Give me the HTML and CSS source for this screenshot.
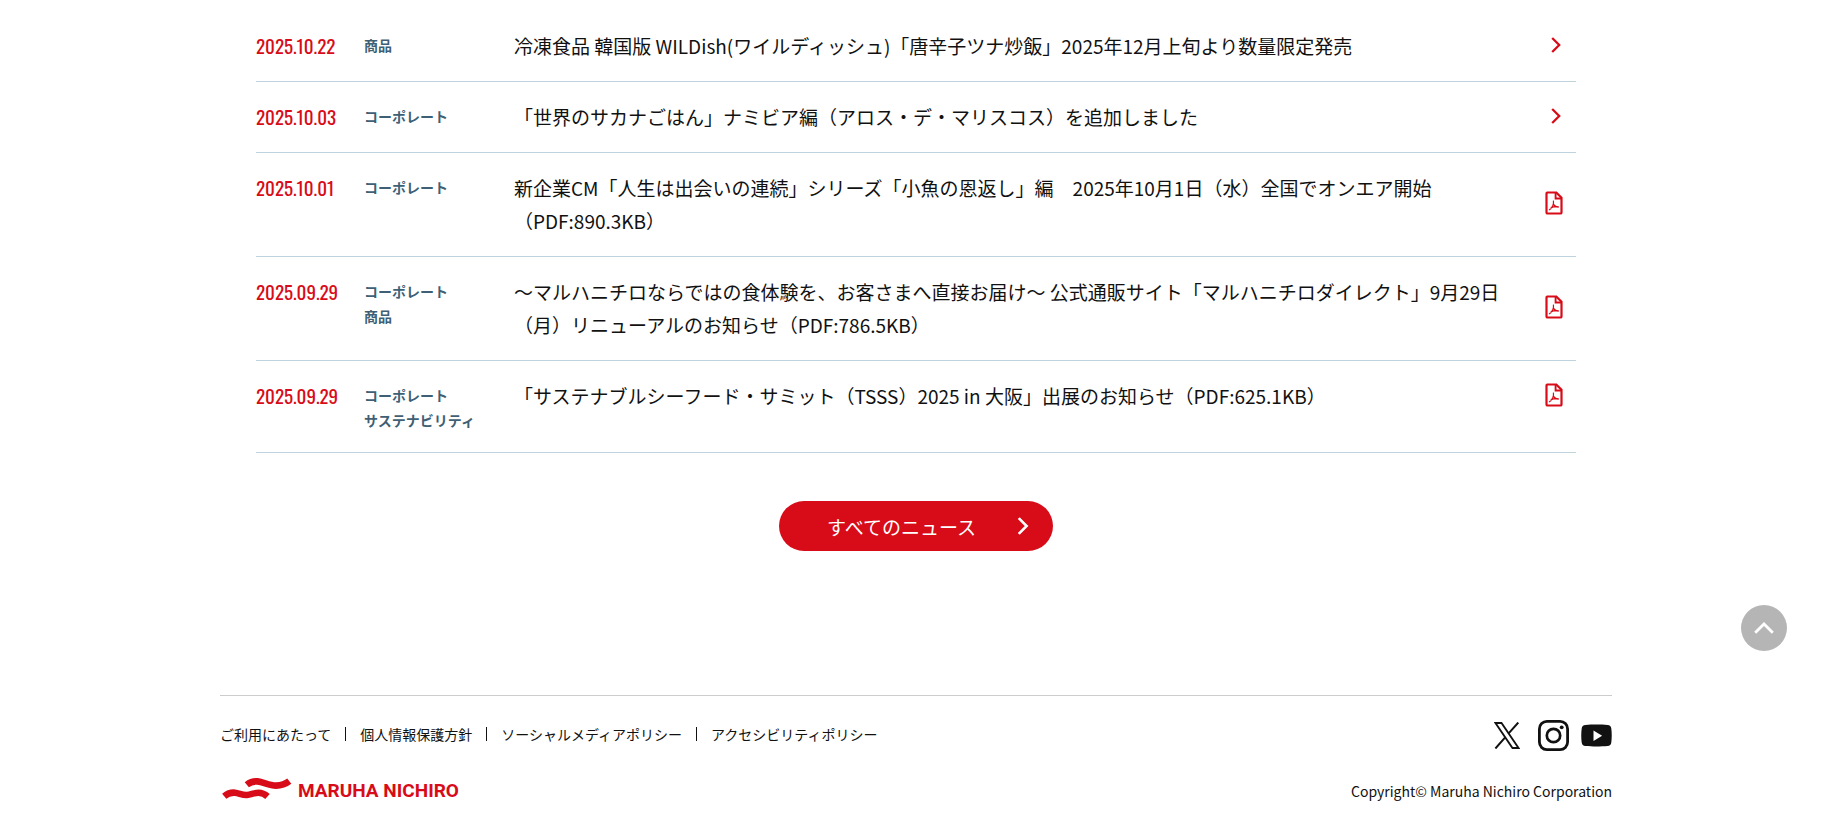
FILE: index.html
```html
<!DOCTYPE html>
<html lang="ja">
<head>
  <meta charset="UTF-8">
  <meta name="viewport" content="width=device-width, initial-scale=1.0">
  <title>マルハニチロ株式会社</title>
  <link rel="stylesheet" href="styles.css">
</head>
<body>
  <!-- Shared icons -->
  <svg class="sprite" aria-hidden="true">
    <symbol id="icon-arrow" viewBox="0 0 10 16">
      <path d="M1.200 1 8.200 8l-7 7" fill="none" stroke="currentColor" stroke-width="2.300"/>
    </symbol>
    <symbol id="icon-pdf" viewBox="0 0 18 24">
      <path d="M2.300 1.500h9l5.200 5.300v14.600a1.100 1.100 0 0 1-1.100 1.100H2.600a1.100 1.100 0 0 1-1.100-1.100V2.300z" fill="none" stroke="currentColor" stroke-width="2.200"/>
      <path d="M10.600 1.500v6h6" fill="none" stroke="currentColor" stroke-width="1.900"/>
      <path d="M8.400 9.600c.3 2 .2 3.400-.5 5C7 16.600 5.700 18.300 4 19M8.200 12.500c.8 2 2.700 3.500 5.600 3.600M5.600 17c2.400-1.100 5-1.500 8.200-1.200" fill="none" stroke="currentColor" stroke-width="1.200"/>
    </symbol>
  </svg>

  <main class="news">
    <ul class="news-list">
      <li class="news-item">
        <time class="news-date" datetime="2025-10-22">2025.10.22</time>
        <div class="news-cat"><span>商品</span></div>
        <a class="news-link" href="#">
          <span class="news-title">冷凍食品 韓国版 WILDish(ワイルディッシュ)「唐辛子ツナ炒飯」2025年12月上旬より数量限定発売</span>
          <svg class="icon-arrow"><use href="#icon-arrow"/></svg>
        </a>
      </li>
      <li class="news-item">
        <time class="news-date" datetime="2025-10-03">2025.10.03</time>
        <div class="news-cat"><span>コーポレート</span></div>
        <a class="news-link" href="#">
          <span class="news-title">「世界のサカナごはん」ナミビア編（アロス・デ・マリスコス）を追加しました</span>
          <svg class="icon-arrow"><use href="#icon-arrow"/></svg>
        </a>
      </li>
      <li class="news-item">
        <time class="news-date" datetime="2025-10-01">2025.10.01</time>
        <div class="news-cat"><span>コーポレート</span></div>
        <a class="news-link" href="#">
          <span class="news-title">新企業CM「人生は出会いの連続」シリーズ「小魚の恩返し」編　2025年10月1日（水）全国でオンエア開始<br>（PDF:890.3KB）</span>
          <svg class="icon-pdf"><use href="#icon-pdf"/></svg>
        </a>
      </li>
      <li class="news-item">
        <time class="news-date" datetime="2025-09-29">2025.09.29</time>
        <div class="news-cat"><span>コーポレート</span><span>商品</span></div>
        <a class="news-link" href="#">
          <span class="news-title">～マルハニチロならではの食体験を、お客さまへ直接お届け～ 公式通販サイト「マルハニチロダイレクト」9月29日（月）リニューアルのお知らせ（PDF:786.5KB）</span>
          <svg class="icon-pdf"><use href="#icon-pdf"/></svg>
        </a>
      </li>
      <li class="news-item">
        <time class="news-date" datetime="2025-09-29">2025.09.29</time>
        <div class="news-cat"><span>コーポレート</span><span>サステナビリティ</span></div>
        <a class="news-link" href="#">
          <span class="news-title">「サステナブルシーフード・サミット（TSSS）2025 in 大阪」出展のお知らせ（PDF:625.1KB）</span>
          <svg class="icon-pdf"><use href="#icon-pdf"/></svg>
        </a>
      </li>
    </ul>
    <a class="btn-all" href="#">
      <span>すべてのニュース</span>
      <svg class="btn-arrow"><use href="#icon-arrow"/></svg>
    </a>
  </main>

  <footer class="footer">
    <div class="footer-row">
      <ul class="footer-nav">
        <li><a href="#">ご利用にあたって</a></li>
        <li><a href="#">個人情報保護方針</a></li>
        <li><a href="#">ソーシャルメディアポリシー</a></li>
        <li><a href="#">アクセシビリティポリシー</a></li>
      </ul>
      <div class="sns">
        <a href="#" aria-label="X">
          <svg width="26" height="27" viewBox="0 0 26 27">
            <path d="M1.500 1h6l17 25h-6z" fill="none" stroke="#111" stroke-width="1.800"/>
            <path d="M24.300.5 14.400 11.700M11.400 15.200 1.400 26.500" fill="none" stroke="#111" stroke-width="2"/>
          </svg>
        </a>
        <a href="#" aria-label="Instagram">
          <svg width="31" height="31" viewBox="0 0 31 31">
            <rect x="1.400" y="1.400" width="28.200" height="28.200" rx="7.500" fill="none" stroke="#111" stroke-width="2.800"/>
            <circle cx="15.500" cy="15.500" r="6.700" fill="none" stroke="#111" stroke-width="2.700"/>
            <circle cx="23.700" cy="7.300" r="1.900" fill="#111"/>
          </svg>
        </a>
        <a href="#" aria-label="YouTube">
          <svg width="31" height="23" viewBox="0 0 31 23">
            <path d="M4.500.9C11 .3 20 .3 26.500.9c2.400.2 3.500 1.300 3.800 3.600.6 4.600.6 9.400 0 14-.3 2.300-1.400 3.400-3.800 3.600-6.500.6-15.500.6-22 0C2.100 21.900 1 20.800.7 18.500c-.6-4.600-.6-9.400 0-14C1 2.200 2.100 1.100 4.500.9z" fill="#111"/>
            <path d="M12.500 6.500v10.400l8.600-5.200z" fill="#fff"/>
          </svg>
        </a>
      </div>
    </div>
    <div class="footer-row footer-bottom">
      <a class="logo" href="#">
        <svg class="logo-mark" width="70" height="22" viewBox="0 0 70 22">
          <path d="M2.200 18.200C5.500 15.500 9 14.300 13 14.700c4 .4 7.500 2.600 12 2.300 4-.3 7-2.200 11.500-2.200 3.500 0 6.500 1.400 9 3.700" fill="none" stroke="#d80c18" stroke-width="6.600"/>
          <path d="M24.800 6.800C28 4.200 31.500 3 35.500 3.400c6 .6 11.500 4.200 18.500 4.200 5 0 9.500-1.400 13.300-4.400" fill="none" stroke="#d80c18" stroke-width="6.600"/>
        </svg>
        <span>MARUHA NICHIRO</span>
      </a>
      <small class="copyright">Copyright© Maruha Nichiro Corporation</small>
    </div>
  </footer>

  <button class="page-top" type="button" aria-label="ページトップへ">
    <svg width="20" height="12" viewBox="0 0 20 12">
      <path d="M1.200 10.800 10 2l8.800 8.800" fill="none" stroke="#fff" stroke-width="2.800"/>
    </svg>
  </button>
</body>
</html>
```
FILE: styles.css
```css
* {
  box-sizing: border-box;
}

body {
  margin: 0;
  padding-right: 2px;
  font-family: "Noto Sans CJK JP", sans-serif;
  font-size: 19px;
  line-height: 33px;
  color: #111;
  background: #fff;
}

a {
  color: inherit;
  text-decoration: none;
}

ul {
  margin: 0;
  padding: 0;
  list-style: none;
}

svg {
  display: block;
  flex-shrink: 0;
}

.sprite {
  position: absolute;
  width: 0;
  height: 0;
}

/* News */
.news {
  max-width: 1320px;
  margin: 0 auto;
  padding-top: 11px;
}

.news-item {
  display: flex;
  padding: 18px 0 19px;
  border-bottom: 1px solid #bfd3df;
}

.news-date {
  width: 108px;
  flex-shrink: 0;
  font-family: "Oswald", "Liberation Sans Narrow", "Roboto Condensed", sans-serif;
  font-size: 19px;
  color: #d80c18;
}

.news-cat {
  display: flex;
  flex-direction: column;
  width: 150px;
  flex-shrink: 0;
  padding-top: 4px;
  font-size: 14px;
  font-weight: 600;
  line-height: 25px;
  color: #3f5f75;
}

.news-link {
  display: flex;
  flex: 1;
  justify-content: space-between;
  align-items: center;
  align-self: flex-start;
  padding-right: 12px;
}

.news-title {
  max-width: 1000px;
}

.icon-arrow {
  width: 10px;
  height: 16px;
  margin: 0 3px 2px;
  color: #d80c18;
}

.icon-pdf {
  width: 18px;
  height: 24px;
  margin: 0 1px 2px;
  color: #d80c18;
}

.btn-all {
  display: flex;
  align-items: center;
  justify-content: space-between;
  width: 274px;
  height: 50px;
  margin: 48px auto 0;
  padding: 0 24px 0 48px;
  border-radius: 25px;
  background: #d80c18;
  color: #fff;
}

.btn-arrow {
  width: 12px;
  height: 18px;
}

/* Footer */
.footer {
  max-width: 1392px;
  margin: 144px auto 0;
  padding: 24px 0;
  border-top: 1px solid #ccc;
  font-size: 14px;
  line-height: 24px;
}

.footer-row {
  display: flex;
  align-items: center;
  justify-content: space-between;
}

.footer-bottom {
  margin-top: 27px;
}

.footer-nav {
  display: flex;
  align-items: center;
  padding-bottom: 4px;
}

.footer-nav li {
  display: flex;
  align-items: center;
}

.footer-nav li + li::before {
  content: "";
  width: 1px;
  height: 14px;
  margin: 0 14px;
  background: #111;
}

.sns {
  display: flex;
  align-items: center;
  gap: 12px;
}

.sns a:first-child {
  margin-right: 6px;
}

.logo {
  display: flex;
  align-items: center;
  gap: 6px;
  padding-left: 2px;
  font-family: Roboto, sans-serif;
  font-size: 19px;
  font-weight: 700;
  color: #d80c18;
}

.logo-mark {
  margin-bottom: 4px;
}

.copyright {
  font-size: 14px;
}

/* Back to top */
.page-top {
  position: fixed;
  right: 47px;
  bottom: 182px;
  display: flex;
  align-items: center;
  justify-content: center;
  width: 46px;
  height: 46px;
  padding: 0;
  border: none;
  border-radius: 50%;
  background: #b5b5b5;
  cursor: pointer;
}
```
